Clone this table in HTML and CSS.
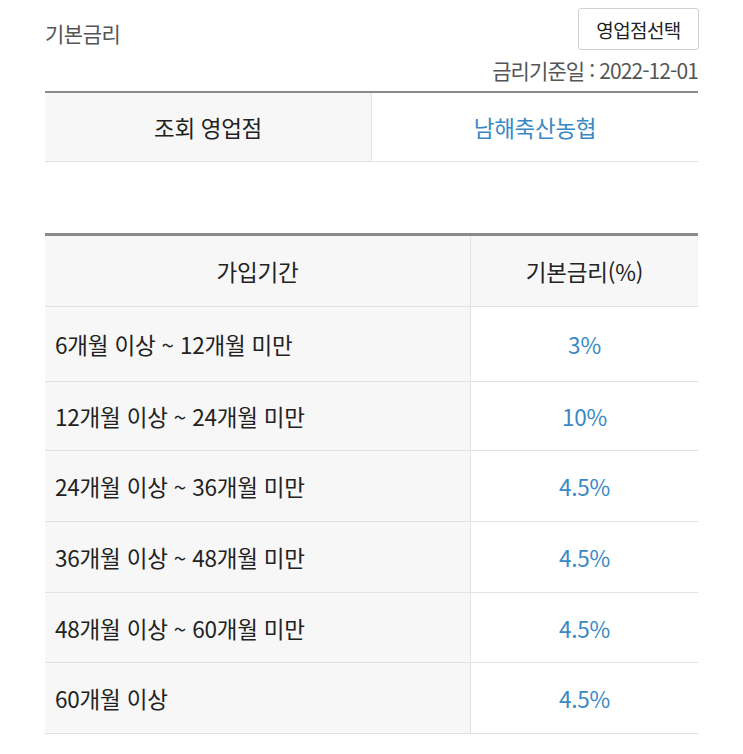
FILE: index.html
```html
<!DOCTYPE html>
<html lang="ko">
<head>
<meta charset="utf-8">
<link rel="stylesheet" href="styles.css">
</head>
<body>
<div class="page">
  <div class="top">
    <h2 class="title">기본금리</h2>
    <button class="btn">영업점선택</button>
  </div>
  <p class="date">금리기준일 : 2022-12-01</p>
  <div class="info">
    <div class="info-label">조회 영업점</div>
    <div class="info-value">남해축산농협</div>
  </div>
  <div class="rates">
    <div class="th">가입기간</div>
    <div class="th th-r">기본금리(%)</div>
    <div class="td">6개월 이상 ~ 12개월 미만</div>
    <div class="td td-r">3%</div>
    <div class="td">12개월 이상 ~ 24개월 미만</div>
    <div class="td td-r">10%</div>
    <div class="td">24개월 이상 ~ 36개월 미만</div>
    <div class="td td-r">4.5%</div>
    <div class="td">36개월 이상 ~ 48개월 미만</div>
    <div class="td td-r">4.5%</div>
    <div class="td">48개월 이상 ~ 60개월 미만</div>
    <div class="td td-r">4.5%</div>
    <div class="td">60개월 이상</div>
    <div class="td td-r">4.5%</div>
  </div>
</div>
</body>
</html>
```
FILE: styles.css
```css
* { box-sizing: border-box; }
body {
  margin: 0;
  background: #fff;
  font-family: "Noto Sans CJK KR", "Noto Sans", sans-serif;
  color: #222;
}
.page {
  width: 653px;
  margin-left: 45px;
}
.top {
  display: flex;
  justify-content: space-between;
  align-items: flex-start;
  padding-top: 8px;
}
.title {
  margin: 12px 0 0;
  font-size: 21px;
  line-height: 26px;
  font-weight: 400;
  color: #555;
  letter-spacing: -0.5px;
}
.btn {
  height: 42px;
  width: 121px;
  margin-right: -1px;
  border: 1px solid #d0d0d0;
  border-radius: 3px;
  background: #fff;
  font-family: inherit;
  font-size: 19px;
  color: #222;
  letter-spacing: -0.6px;
  padding: 0;
}
.date {
  margin: 7px 0 8px;
  text-align: right;
  font-size: 21px;
  line-height: 26px;
  color: #555;
  letter-spacing: -0.9px;
}
.info {
  display: grid;
  grid-template-columns: 327px 1fr;
  border-top: 2px solid #8a8a8a;
  border-bottom: 1px solid #e2e2e2;
  height: 71px;
}
.info-label, .info-value {
  display: flex;
  align-items: center;
  justify-content: center;
  font-size: 22.5px;
  letter-spacing: -0.3px;
}
.info-label {
  background: #f7f7f7;
  border-right: 1px solid #e2e2e2;
}
.info-value { color: #3a89c4; }
.rates {
  margin-top: 71px;
  display: grid;
  grid-template-columns: 426px 1fr;
  grid-template-rows: 71px 75px 69px 71px 71px 70px 71px;
  border-top: 3px solid #8a8a8a;
}
.th, .td {
  display: flex;
  align-items: center;
  font-size: 22.5px;
  letter-spacing: -0.2px;
  border-bottom: 1px solid #e2e2e2;
}
.th {
  justify-content: center;
  background: #f7f7f7;
  border-right: 1px solid #e2e2e2;
}
.th-r { border-right: none; }
.td {
  background: #f7f7f7;
  padding-left: 10px;
  border-right: 1px solid #e2e2e2;
}
.td-r {
  background: #fff;
  justify-content: center;
  padding-left: 0;
  border-right: none;
  color: #3a89c4;
}
```
